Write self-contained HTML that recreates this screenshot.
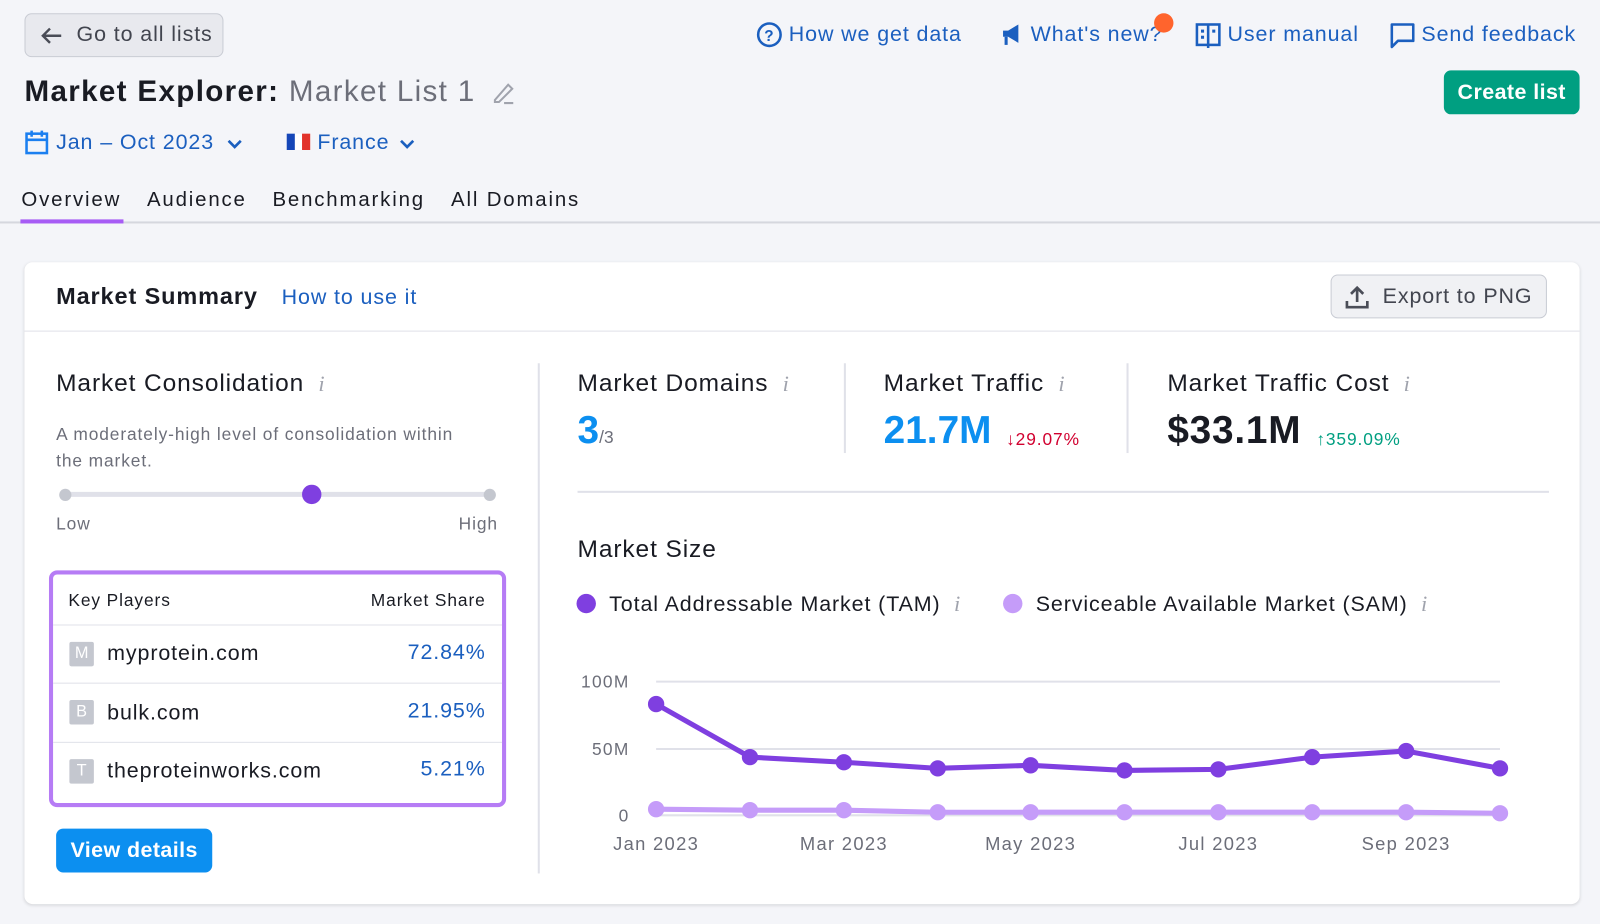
<!DOCTYPE html>
<html><head><meta charset="utf-8"><style>
html,body{margin:0;padding:0;width:1600px;height:924px;overflow:hidden;background:#f4f5f9;font-family:"Liberation Sans",sans-serif;}
#w{position:absolute;left:0;top:0;width:1568px;height:906px;transform:scale(1.0204);transform-origin:0 0;letter-spacing:0.055em;}
.a{position:absolute;white-space:nowrap;}
.lnk{color:#1b5fbf;font-size:21px;}
.ic{color:#a0a3ad;font-style:italic;font-family:"Liberation Serif",serif;font-size:22px;}
.tab{font-size:20px;color:#191b23;letter-spacing:0.09em;top:185px;}
.big{letter-spacing:0;}
</style></head><body><div id="w">
<div class="a" style="left:24px;top:13px;width:195px;height:43px;border:1px solid #c9ccd4;border-radius:7px;background:#e8e9ee;box-sizing:border-box;"></div>
<svg class="a" style="left:38px;top:25px" width="24" height="20" viewBox="0 0 24 20"><path d="M22 10H4M11 3L4 10l7 7" stroke="#4a4d57" stroke-width="2.4" fill="none"/></svg>
<div class="a" style="left:75px;top:22px;font-size:21px;color:#42454f;">Go to all lists</div>
<svg class="a" style="left:741px;top:21px" width="26" height="26" viewBox="0 0 26 26"><circle cx="13" cy="13" r="11" stroke="#1b5fbf" stroke-width="2.5" fill="none"/><text x="13" y="19" text-anchor="middle" font-size="15" font-weight="bold" fill="#1b5fbf" font-family="Liberation Sans">?</text></svg>
<div class="a lnk" style="left:773px;top:22px">How we get data</div>
<svg class="a" style="left:980px;top:22px" width="24" height="24" viewBox="0 0 24 24"><path d="M3 8h5l10-6v18L8 14H3z" fill="#1b5fbf"/><path d="M6 14v8" stroke="#1b5fbf" stroke-width="3"/></svg>
<div class="a lnk" style="left:1010px;top:22px">What's new?</div>
<div class="a" style="left:1131px;top:13px;width:19px;height:19px;border-radius:50%;background:#ff642d;"></div>
<svg class="a" style="left:1171px;top:22px" width="26" height="26" viewBox="0 0 26 26"><rect x="2" y="2" width="22" height="20" fill="none" stroke="#1b5fbf" stroke-width="2.5"/><path d="M13 2v23" stroke="#1b5fbf" stroke-width="2.5"/><rect x="6" y="7" width="3" height="3" fill="#1b5fbf"/><rect x="6" y="13" width="3" height="3" fill="#1b5fbf"/><rect x="17" y="7" width="3" height="3" fill="#1b5fbf"/></svg>
<div class="a lnk" style="left:1203px;top:22px">User manual</div>
<svg class="a" style="left:1362px;top:22px" width="26" height="26" viewBox="0 0 26 26"><path d="M2 2h21v16H8l-6 6z" fill="none" stroke="#1b5fbf" stroke-width="2.5" stroke-linejoin="round"/></svg>
<div class="a lnk" style="left:1393px;top:22px">Send feedback</div>
<div class="a" style="left:1415px;top:69px;width:133px;height:43px;border-radius:7px;background:#009f81;color:#fff;font-size:21px;font-weight:bold;text-align:center;line-height:43px;letter-spacing:0.02em;">Create list</div>
<div class="a" style="left:24px;top:74px;font-size:29px;font-weight:bold;color:#191b23;letter-spacing:0.045em;">Market Explorer: <span style="color:#6c6e79;font-weight:normal;">Market List 1</span></div>
<svg class="a" style="left:481px;top:78px" width="26" height="26" viewBox="0 0 26 26"><path d="M4 20L17 5l4 4L8 22H4z" fill="none" stroke="#a0a3ad" stroke-width="2"/><path d="M13 23h9" stroke="#a0a3ad" stroke-width="2"/></svg>
<svg class="a" style="left:24px;top:127px" width="24" height="26" viewBox="0 0 24 26"><rect x="2" y="4" width="20" height="19" fill="none" stroke="#1b7ff0" stroke-width="2.5"/><path d="M2 10h20M7 1v6M17 1v6" stroke="#1b7ff0" stroke-width="2.5"/></svg>
<div class="a lnk" style="left:55px;top:128px;">Jan – Oct 2023</div>
<svg class="a" style="left:221px;top:134px" width="18" height="14" viewBox="0 0 18 14"><path d="M3 4l6 6 6-6" stroke="#1b5fbf" stroke-width="2.6" fill="none"/></svg>
<div class="a" style="left:281px;top:131px;width:8px;height:16px;background:#1546b8"></div>
<div class="a" style="left:289px;top:131px;width:7px;height:16px;background:#fff"></div>
<div class="a" style="left:296px;top:131px;width:8px;height:16px;background:#e2332b"></div>
<div class="a lnk" style="left:311px;top:128px">France</div>
<svg class="a" style="left:390px;top:134px" width="18" height="14" viewBox="0 0 18 14"><path d="M3 4l6 6 6-6" stroke="#1b5fbf" stroke-width="2.6" fill="none"/></svg>
<div class="a tab" style="left:21px;">Overview</div>
<div class="a tab" style="left:144px;">Audience</div>
<div class="a tab" style="left:267px;">Benchmarking</div>
<div class="a tab" style="left:442px;">All Domains</div>
<div class="a" style="left:0;top:217px;width:1568px;height:2px;background:#d5d7de"></div>
<div class="a" style="left:20px;top:215px;width:101px;height:4px;background:#a75cf5"></div>
<div class="a" style="left:24px;top:257px;width:1524px;height:629px;background:#fff;border-radius:8px;box-shadow:0 1px 3px rgba(0,0,0,.12);"></div>
<div class="a" style="left:24px;top:324px;width:1524px;height:1px;background:#e0e1e9"></div>
<div class="a" style="left:55px;top:277px;font-size:23px;font-weight:bold;color:#191b23;">Market Summary</div>
<div class="a lnk" style="left:276px;top:280px;">How to use it</div>
<div class="a" style="left:1304px;top:269px;width:212px;height:43px;border:1px solid #c9ccd4;border-radius:7px;background:#f0f1f4;box-sizing:border-box;"></div>
<svg class="a" style="left:1317px;top:278px" width="26" height="26" viewBox="0 0 26 26"><path d="M13 18V4M7 10l6-6 6 6" stroke="#4a4d57" stroke-width="2.6" fill="none"/><path d="M3 17v6h20v-6" stroke="#4a4d57" stroke-width="2.6" fill="none"/></svg>
<div class="a" style="left:1355px;top:279px;font-size:21px;color:#42454f;">Export to PNG</div>
<div class="a" style="left:55px;top:362px;font-size:24px;color:#191b23;">Market Consolidation <span class="ic">&nbsp;i</span></div>
<div class="a" style="left:55px;top:413px;font-size:17px;color:#6c6e79;line-height:26px;white-space:normal;width:418px;">A moderately-high level of consolidation within the market.</div>
<div class="a" style="left:63px;top:482px;width:417px;height:5px;background:#e0e1e9;border-radius:3px;"></div>
<div class="a" style="left:58px;top:479px;width:12px;height:12px;border-radius:50%;background:#c4c7cf"></div>
<div class="a" style="left:474px;top:479px;width:12px;height:12px;border-radius:50%;background:#c4c7cf"></div>
<div class="a" style="left:296px;top:475px;width:19px;height:19px;border-radius:50%;background:#7f3fe0"></div>
<div class="a" style="left:55px;top:504px;font-size:17px;color:#6c6e79;">Low</div>
<div class="a" style="right:1080px;top:504px;font-size:17px;color:#6c6e79;">High</div>
<div class="a" style="left:48px;top:559px;width:448px;height:232px;border:4px solid #b67cf5;border-radius:8px;box-sizing:border-box;"></div>
<div class="a" style="left:67px;top:579px;font-size:17px;color:#191b23;">Key Players</div>
<div class="a" style="right:1092px;top:579px;font-size:17px;color:#191b23;">Market Share</div>
<div class="a" style="left:52px;top:612px;width:440px;height:1px;background:#e0e1e9"></div>
<div class="a" style="left:52px;top:669px;width:440px;height:1px;background:#e0e1e9"></div>
<div class="a" style="left:52px;top:727px;width:440px;height:1px;background:#e0e1e9"></div>
<div class="a" style="left:68px;top:629px;width:24px;height:24px;background:#c4c7cf;color:#fff;font-size:16px;text-align:center;line-height:24px;border-radius:2px;letter-spacing:0">M</div>
<div class="a" style="left:68px;top:686px;width:24px;height:24px;background:#c4c7cf;color:#fff;font-size:16px;text-align:center;line-height:24px;border-radius:2px;letter-spacing:0">B</div>
<div class="a" style="left:68px;top:744px;width:24px;height:24px;background:#c4c7cf;color:#fff;font-size:16px;text-align:center;line-height:24px;border-radius:2px;letter-spacing:0">T</div>
<div class="a" style="left:105px;top:629px;font-size:21px;color:#191b23;">myprotein.com</div>
<div class="a" style="left:105px;top:687px;font-size:21px;color:#191b23;">bulk.com</div>
<div class="a" style="left:105px;top:744px;font-size:21px;color:#191b23;">theproteinworks.com</div>
<div class="a" style="right:1092px;top:628px;font-size:21px;color:#1b5fbf;">72.84%</div>
<div class="a" style="right:1092px;top:685px;font-size:21px;color:#1b5fbf;">21.95%</div>
<div class="a" style="right:1092px;top:742px;font-size:21px;color:#1b5fbf;">5.21%</div>
<div class="a" style="left:55px;top:812px;width:153px;height:43px;border-radius:7px;background:#0c8ff0;color:#fff;font-size:21px;font-weight:bold;text-align:center;line-height:43px;letter-spacing:0.02em;">View details</div>
<div class="a" style="left:527px;top:356px;width:2px;height:500px;background:#e0e1e9"></div>
<div class="a" style="left:566px;top:362px;font-size:24px;color:#191b23;">Market Domains <span class="ic">&nbsp;i</span></div>
<div class="a big" style="left:566px;top:401px;font-size:38px;font-weight:bold;color:#0c8ff0;">3<span style="font-size:17px;font-weight:normal;color:#6c6e79">/3</span></div>
<div class="a" style="left:827px;top:356px;width:2px;height:88px;background:#e0e1e9"></div>
<div class="a" style="left:866px;top:362px;font-size:24px;color:#191b23;">Market Traffic <span class="ic">&nbsp;i</span></div>
<div class="a big" style="left:866px;top:401px;font-size:38px;font-weight:bold;color:#0c8ff0;">21.7M</div>
<div class="a" style="left:986px;top:421px;font-size:17px;color:#d1002f;">↓29.07%</div>
<div class="a" style="left:1104px;top:356px;width:2px;height:88px;background:#e0e1e9"></div>
<div class="a" style="left:1144px;top:362px;font-size:24px;color:#191b23;">Market Traffic Cost <span class="ic">&nbsp;i</span></div>
<div class="a big" style="left:1144px;top:401px;font-size:38px;font-weight:bold;color:#191b23;letter-spacing:0.02em;">$33.1M</div>
<div class="a" style="left:1290px;top:421px;font-size:17px;color:#009f81;">↑359.09%</div>
<div class="a" style="left:566px;top:481px;width:952px;height:2px;background:#e0e1e9"></div>
<div class="a" style="left:566px;top:525px;font-size:24px;color:#191b23;">Market Size</div>
<div class="a" style="left:565px;top:582px;width:19px;height:19px;border-radius:50%;background:#7f3fe0"></div>
<div class="a" style="left:597px;top:579px;font-size:21px;color:#191b23;">Total Addressable Market (TAM) <span class="ic">&nbsp;i</span></div>
<div class="a" style="left:983px;top:582px;width:19px;height:19px;border-radius:50%;background:#c59cf9"></div>
<div class="a" style="left:1015px;top:579px;font-size:21px;color:#191b23;">Serviceable Available Market (SAM) <span class="ic">&nbsp;i</span></div>
<svg class="a" style="left:560px;top:650px;letter-spacing:0.08em" width="960" height="200" viewBox="560 650 960 200" font-family="Liberation Sans">
<line x1="643" y1="668" x2="1470" y2="668" stroke="#e0e1e9" stroke-width="2"/>
<line x1="643" y1="734" x2="1470" y2="734" stroke="#e0e1e9" stroke-width="2"/>
<line x1="643" y1="799" x2="1470" y2="799" stroke="#e0e1e9" stroke-width="2"/>
<text x="617" y="674" font-size="17" fill="#6c6e79" text-anchor="end">100M</text>
<text x="617" y="740" font-size="17" fill="#6c6e79" text-anchor="end">50M</text>
<text x="617" y="805" font-size="17" fill="#6c6e79" text-anchor="end">0</text>
<g font-size="18" fill="#6c6e79" text-anchor="middle">
<text x="643" y="833">Jan 2023</text><text x="827" y="833">Mar 2023</text><text x="1010" y="833">May 2023</text><text x="1194" y="833">Jul 2023</text><text x="1378" y="833">Sep 2023</text></g>
<polyline fill="none" stroke="#c59cf9" stroke-width="5" points="643,793 735,794 827,794 919,796 1010,796 1102,796 1194,796 1286,796 1378,796 1470,797"/>
<g fill="#c59cf9"><circle cx="643" cy="793" r="8"/><circle cx="735" cy="794" r="8"/><circle cx="827" cy="794" r="8"/><circle cx="919" cy="796" r="8"/><circle cx="1010" cy="796" r="8"/><circle cx="1102" cy="796" r="8"/><circle cx="1194" cy="796" r="8"/><circle cx="1286" cy="796" r="8"/><circle cx="1378" cy="796" r="8"/><circle cx="1470" cy="797" r="8"/></g>
<polyline fill="none" stroke="#7f3fe0" stroke-width="5" points="643,690 735,742 827,747 919,753 1010,750 1102,755 1194,754 1286,742 1378,736 1470,753"/>
<g fill="#7f3fe0"><circle cx="643" cy="690" r="8"/><circle cx="735" cy="742" r="8"/><circle cx="827" cy="747" r="8"/><circle cx="919" cy="753" r="8"/><circle cx="1010" cy="750" r="8"/><circle cx="1102" cy="755" r="8"/><circle cx="1194" cy="754" r="8"/><circle cx="1286" cy="742" r="8"/><circle cx="1378" cy="736" r="8"/><circle cx="1470" cy="753" r="8"/></g>
</svg>
</div></body></html>
